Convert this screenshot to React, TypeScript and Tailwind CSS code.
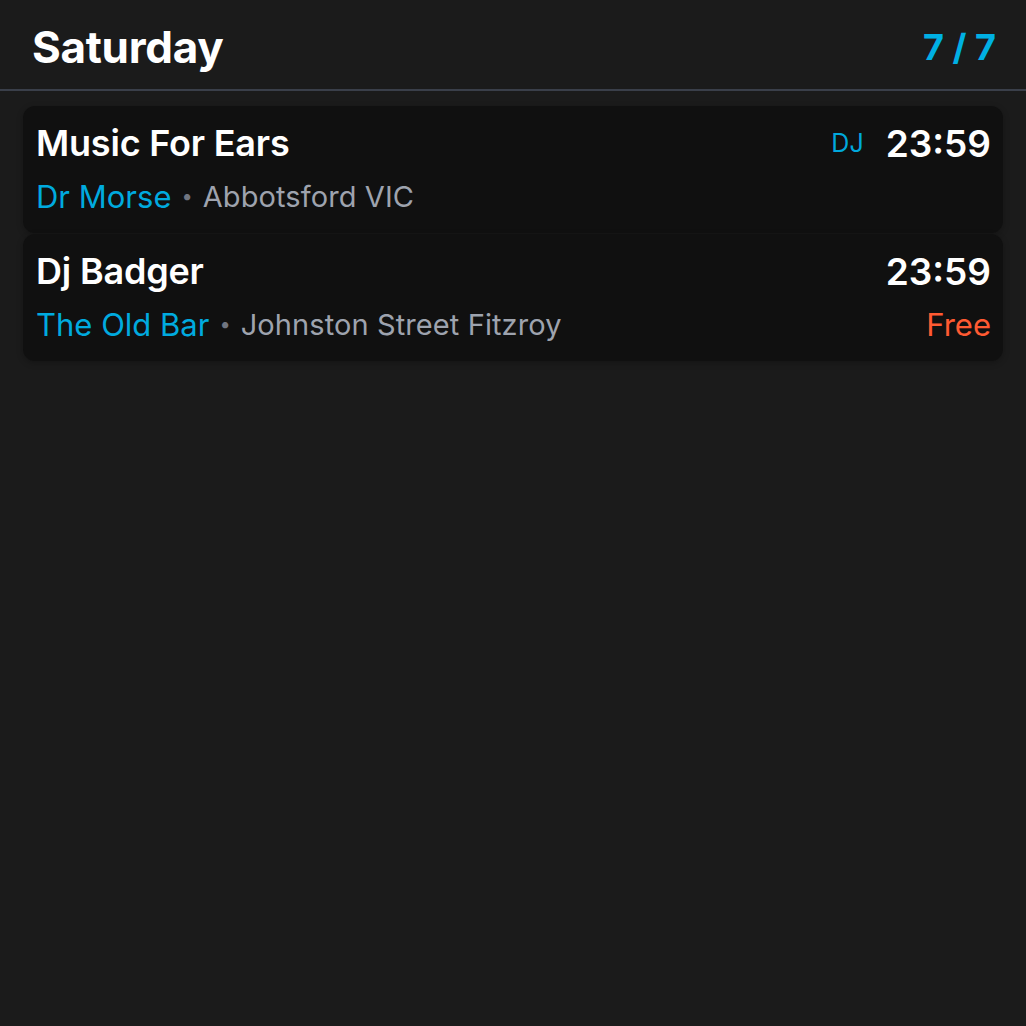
import React from "react";

type Item = { title: string; venue: string; place: string; tag?: string; time: string; price?: string };

const items: Item[] = [
  { title: "Music For Ears", venue: "Dr Morse", place: "Abbotsford VIC", tag: "DJ", time: "23:59" },
  { title: "Dj Badger", venue: "The Old Bar", place: "Johnston Street Fitzroy", time: "23:59", price: "Free" },
];

export default function App() {
  return (
    <div className="w-[1026px] h-[1026px] bg-[#1b1b1b] text-white" style={{ fontFamily: "Inter, 'Noto Sans', sans-serif" }}>
      <div className="flex items-center justify-between pl-[32px] pr-[30px] h-[91px] pt-[5px] border-b-2 border-[#3a3f4a]">
        <div className="text-[44px] font-bold tracking-[-0.3px] leading-none">Saturday</div>
        <div className="text-[36px] font-bold text-[#00b0e4] leading-none">7 / 7</div>
      </div>
      <div className="flex flex-col gap-[1px] px-[23px] pt-[15px]">
        {items.map((it, i) => (
          <div key={i} className="bg-[#101010] rounded-[12px] h-[127px] pl-[13px] pr-[12px] pt-[17px] flex flex-col gap-[13px] shadow-[0_2px_6px_rgba(0,0,0,0.25)]">
            <div className="flex items-center justify-between h-[40px]">
              <div className="text-[36px] font-semibold tracking-[-0.2px] leading-none">{it.title}</div>
              <div className="flex items-center gap-[22px]">
                {it.tag && <span className="text-[25px] text-[#00a8dc] leading-none">{it.tag}</span>}
                <span className="text-[37px] font-semibold leading-none">{it.time}</span>
              </div>
            </div>
            <div className="flex items-center justify-between h-[40px]">
              <div className="flex items-center text-[31px] leading-none">
                <span className="text-[#00aadf]">{it.venue}</span>
                <span className="text-[#707580] text-[20px] mx-[10px]">•</span>
                <span className="text-[#9ea3ae] text-[29px] tracking-[0.1px]">{it.place}</span>
              </div>
              {it.price && <span className="text-[31px] text-[#ff5a32] leading-none">{it.price}</span>}
            </div>
          </div>
        ))}
      </div>
    </div>
  );
}
